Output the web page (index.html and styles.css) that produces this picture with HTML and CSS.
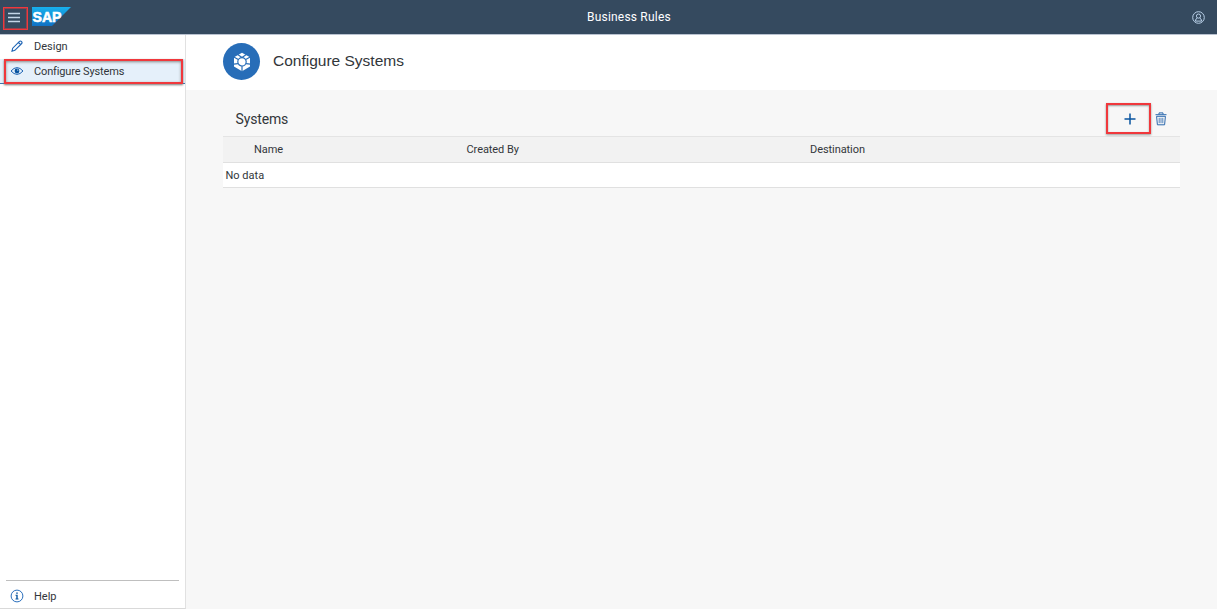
FILE: index.html
```html
<!DOCTYPE html>
<html lang="en">
<head>
<meta charset="utf-8">
<title>Business Rules</title>
<link rel="stylesheet" href="styles.css">
</head>
<body>
<div class="app">
  <header class="shell">
    <button class="menu" aria-label="Menu">
      <svg width="12" height="11" viewBox="0 0 12 11"><path d="M0 1.5h12M0 5.5h12M0 9.5h12" stroke="#c4d6e8" stroke-width="1.6"/></svg>
    </button>
    <svg class="logo" width="40" height="19" viewBox="0 0 40 19">
      <defs><linearGradient id="sap" x1="0" y1="0" x2="0" y2="1"><stop offset="0" stop-color="#18b1ed"/><stop offset="1" stop-color="#1070c3"/></linearGradient></defs>
      <path d="M0 0H39L20 19H0Z" fill="url(#sap)"/>
      <text class="logo-text" x="0.5" y="14.9" textLength="29" lengthAdjust="spacingAndGlyphs">SAP</text>
    </svg>
    <h1 class="shell-title">Business Rules</h1>
    <svg class="user" width="13" height="13" viewBox="0 0 13 13" fill="none" stroke="#b9d0e8"><circle cx="6.5" cy="6.5" r="5.8"/><circle cx="6.5" cy="5.1" r="2.1"/><path d="M3.4 10.1Q3.6 7.5 5.2 7.2M9.6 10.1Q9.4 7.5 7.8 7.2M3.4 10.1H9.6"/></svg>
  </header>
  <div class="body">
    <nav class="side">
      <a class="item">
        <svg class="icon" width="14" height="14" viewBox="0 0 14 14" fill="none" stroke="#1e64b4" stroke-width="1.1"><path d="M2 12.2L2.7 9.2L9.5 2.4Q10.4 1.5 11.4 2.5Q12.6 3.6 11.7 4.5L4.9 11.3ZM8.4 3.5L10.6 5.7"/></svg>
        <span>Design</span>
      </a>
      <div class="current">
        <a class="item selected">
          <svg class="icon" width="14" height="14" viewBox="0 0 14 14"><path d="M1 7Q7 .2 13 7Q7 13.8 1 7Z" fill="none" stroke="#1e64b4"/><circle cx="7" cy="7" r="2.4" fill="#0854a0"/><circle cx="7.8" cy="6.1" r=".6" fill="#e5f0fa"/></svg>
          <span>Configure Systems</span>
        </a>
      </div>
      <div class="help">
        <a class="item">
          <svg class="icon" width="14" height="14" viewBox="0 0 14 14"><circle cx="7" cy="7" r="5.9" fill="none" stroke="#2b70bd"/><path d="M6.2 3.4h1.6v1.4H6.2zM5.5 5.8h2.2v3.8h.8v.9h-3v-.9h.8V6.7h-.8z" fill="#0854a0"/></svg>
          <span>Help</span>
        </a>
      </div>
    </nav>
    <main class="main">
      <div class="page-head">
        <span class="avatar">
          <svg width="18" height="20" viewBox="0 0 18 20"><path d="M9 .8L17 5.2V14.6L9 19.2L1 14.6V5.2Z" fill="#fff"/><g fill="none" stroke="#276db8" stroke-width="1.2"><circle cx="9" cy="9.8" r="4.2"/><path d="M9 14V19.5M.8 4.9L5.3 7.6M17.2 4.9L12.7 7.6M.8 12.2L5 11.7M17.2 12.2L13 11.7M4.7 2.6L9 5.6L13.3 2.6"/></g></svg>
        </span>
        <h2 class="page-title">Configure Systems</h2>
      </div>
      <section class="systems">
        <div class="toolbar">
          <h3 class="section-title">Systems</h3>
          <button class="add" aria-label="Add"><svg width="12" height="12" viewBox="0 0 12 12"><path d="M6 .5v11M.5 6h11" stroke="#0854a0" stroke-width="1.5"/></svg></button>
          <button class="delete" aria-label="Delete"><svg width="12" height="14" viewBox="0 0 12 14" fill="none" stroke="#2b68ad"><path d="M.5 2.7H11.5M4 2.4V.9H8V2.4"/><path d="M1.6 4.3L2.4 12.8H9.6L10.4 4.3Z"/><path d="M4.2 5.8V11.2M6 5.8V11.2M7.8 5.8V11.2" stroke-width=".8"/></svg></button>
        </div>
        <div class="row columns"><span>Name</span><span>Created By</span><span>Destination</span></div>
        <div class="row empty">No data</div>
      </section>
    </main>
  </div>
</div>
</body>
</html>
```
FILE: styles.css
```css
* { box-sizing: border-box; }
body { margin: 0; font-family: Roboto, "Liberation Sans", sans-serif; font-size: 11px; color: #32363a; background: #f7f7f7; }
h1, h2, h3 { margin: 0; font-weight: 400; }
button { margin: 0; padding: 0; border: 0; background: none; }
svg { display: block; flex: none; }
.app { display: flex; flex-direction: column; height: 609px; overflow: hidden; }
.shell { display: grid; grid-template-columns: 28px 556px auto 1fr; align-items: center; flex: none; height: 35px; padding: 0 12px 0 3px; background: #354a5f; border-bottom: 1px solid #b9c2d0; }
.menu { display: flex; align-items: center; justify-content: center; width: 25px; height: 23px; margin-top: 3px; padding: 0 3px 3px 0; border: 1px solid #f0383c; box-shadow: inset 0 0 0 1px rgba(240, 56, 60, .5); }
.logo { margin: 0 0 1px 1px; }
.logo-text { font: bold 15.5px "Liberation Sans", sans-serif; fill: #fff; stroke: #fff; stroke-width: .6px; }
.shell-title { font-size: 12px; color: #fff; letter-spacing: .2px; }
.user { justify-self: end; }
.body { display: flex; flex: 1; min-height: 0; }
.side { display: flex; flex-direction: column; flex: none; width: 186px; background: #fff; border-right: 1px solid #e1e1e1; border-bottom: 1px solid #d9d9d9; }
.item { display: flex; align-items: center; height: 24px; padding: 0 0 2px 10px; gap: 10px; color: #32363a; }
.current { height: 25px; background: #e5f0fa; border-bottom: 1px solid #3c75b0; }
.selected { height: 25px; margin: 0 2px 0 4px; padding: 0 0 1px 4px; border: 2px solid #f0383c; box-shadow: 0 1px 2px #777, inset 0 1px 3px #888; letter-spacing: -.14px; background: #e5f0fa; }
.help { margin: auto 6px 0; border-top: 1px solid #bfbfbf; height: 28px; }
.help .item { height: 30px; padding: 0 0 0 4px; }
.main { flex: 1; min-width: 0; }
.page-head { display: flex; align-items: center; gap: 13px; height: 55px; padding: 0 0 2px 37px; background: #fff; }
.avatar { display: flex; align-items: center; justify-content: center; width: 37px; height: 37px; border-radius: 50%; background: #276db8; }
.page-title { padding-bottom: 1px; font: 15.5px "Liberation Sans", sans-serif; }
.systems { margin: 12px 37px 0; }
.toolbar { display: flex; align-items: center; height: 34px; padding: 0 13px 2px 12.5px; }
.section-title { flex: 1; padding-top: 2px; font-size: 14px; letter-spacing: -.15px; }
.add { display: flex; align-items: center; justify-content: center; width: 45px; height: 31px; padding: 1px 0 0 3px; border: 2px solid #f0383c; box-shadow: 0 1px 2px #999, inset 0 1px 2px #999; }
.delete { margin-left: 4px; padding-top: 1px; }
.row { display: grid; align-items: center; }
.columns { grid-template-columns: 212.5px 343.5px 1fr; height: 27px; padding-left: 31px; background: #f2f2f2; border-top: 1px solid #e4e4e4; border-bottom: 1px solid #e0e0e0; letter-spacing: -.07px; }
.empty { height: 25px; padding-left: 2.5px; background: #fff; border-bottom: 1px solid #e0e0e0; }
```
